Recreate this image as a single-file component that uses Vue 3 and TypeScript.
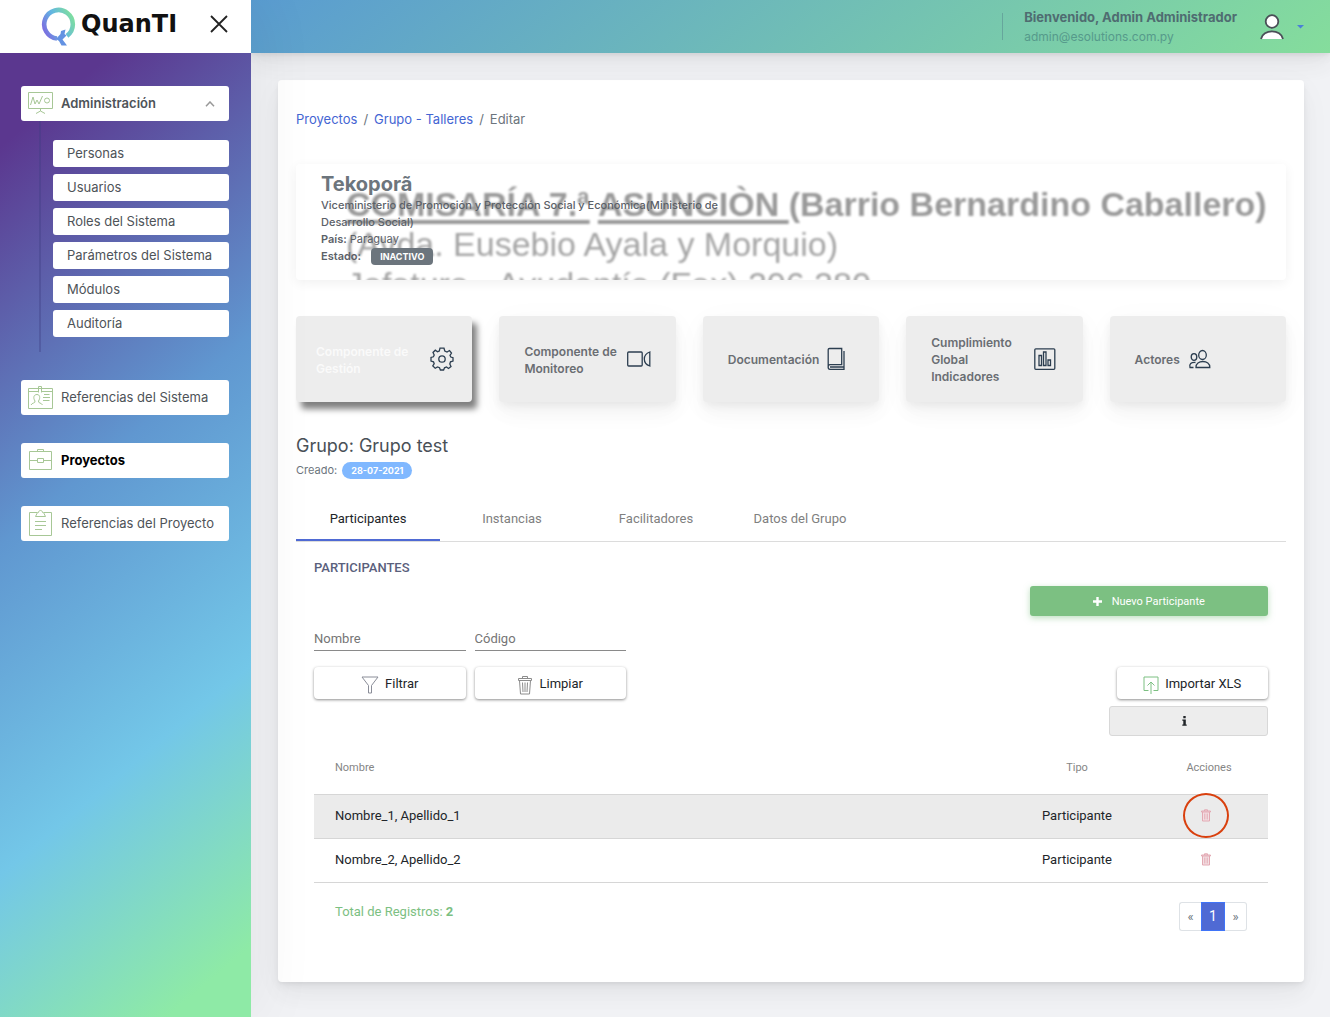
<script setup lang="ts">
import { ref } from 'vue'

interface Participant {
  name: string
  type: string
  marked: boolean
}

const adminLinks: string[] = ['Personas', 'Usuarios', 'Roles del Sistema', 'Parámetros del Sistema', 'Módulos', 'Auditoría']
const tabs: string[] = ['Participantes', 'Instancias', 'Facilitadores', 'Datos del Grupo']
const activeTab = ref<string>('Participantes')
const adminOpen = ref<boolean>(true)
const filterName = ref<string>('')
const filterCode = ref<string>('')
const participants: Participant[] = [
  { name: 'Nombre_1, Apellido_1', type: 'Participante', marked: true },
  { name: 'Nombre_2, Apellido_2', type: 'Participante', marked: false },
]

function clearFilters(): void {
  filterName.value = ''
  filterCode.value = ''
}
</script>

<template>
  <div class="page">
    <aside class="sidebar">
      <div class="brand">
        <a class="logo" href="#">
          <svg width="35" height="40" viewBox="0 0 35 40" aria-hidden="true">
            <defs>
              <linearGradient id="ring" x1="0" y1="0.7" x2="1" y2="0.2">
                <stop offset="0" stop-color="#7a72e0" />
                <stop offset="0.45" stop-color="#62b6e2" />
                <stop offset="1" stop-color="#7fdf9f" />
              </linearGradient>
            </defs>
            <path d="M16 31.500 A14.300 14.300 0 1 1 26 28.800" fill="none" stroke="url(#ring)" stroke-width="4.600" />
            <path d="M15 32 L19.500 27 L20 24 L24.500 22.500 L23.500 27 L25.500 28.500 L21.500 32.500 L26 38.500 L20.500 38.500 L18 34 Z" fill="#6392e2" />
          </svg>
          <span>QuanTI</span>
        </a>
        <button class="close" type="button" aria-label="Cerrar menú">
          <svg width="18" height="18" viewBox="0 0 18 18"><path d="M1 1 L17 17 M17 1 L1 17" stroke="#222" stroke-width="1.800" fill="none" /></svg>
        </button>
      </div>
      <nav class="menu">
        <div>
          <button class="item open" type="button" :aria-expanded="adminOpen" @click="adminOpen = !adminOpen">
            <svg class="item-icon" width="26" height="26" viewBox="0 0 26 26">
              <path d="M.5 2.500 H24.500 V18.500 H.5 Z M12.500 18.500 V21 L8 23.500 M12.500 21 L17 23.500 M2.500 15 L5 7 L7 14 L9 10 L11 14 L14.500 6" />
              <circle cx="19" cy="10.500" r="2.500" />
            </svg>
            <span>Administración</span>
            <svg class="chevron" width="10" height="6" viewBox="0 0 10 6"><path d="M1 5.300 L5 1 L9 5.300" /></svg>
          </button>
          <ul v-if="adminOpen" class="submenu">
            <li v-for="link in adminLinks" :key="link"><a href="#">{{ link }}</a></li>
          </ul>
        </div>
        <a class="item" href="#">
          <svg class="item-icon" width="26" height="26" viewBox="0 0 26 26">
            <path d="M.5 4.500 H24.500 V24.500 H.5 Z M.5 7.500 H11 M14 7.500 H24.500 M10.500 8.500 V2.500 H13.500 V8.500 M16 10.500 H21.500 M15 13.500 H22 M15 16.500 H21.500 M3 21 C4 18.500 7.500 19.500 7 17 C5 14 5.500 10.500 9 10.500 C12 10.500 12.500 14 10.500 17 C10 19.500 13.500 18.500 14.500 21" />
          </svg>
          <span>Referencias del Sistema</span>
        </a>
        <a class="item current" href="#">
          <svg class="item-icon" width="26" height="26" viewBox="0 0 26 26">
            <path d="M1.500 4.500 H23.500 V22.500 H1.500 Z M9.500 4.500 V2.500 H15.500 V4.500 M1.500 13.500 H9.500 M15.500 13.500 H23.500 M9.500 11.500 H15.500 V15.500 H9.500 Z" />
          </svg>
          <span>Proyectos</span>
        </a>
        <a class="item" href="#">
          <svg class="item-icon" width="26" height="28" viewBox="0 0 26 28">
            <path d="M9 3.500 H1.500 V26.500 H23.500 V3.500 H16 M7.500 7.500 L9.500 3.500 H10.500 C10.500 .8 14.500 .8 14.500 3.500 H15.500 L17.500 7.500 Z M7 12.500 H18 M7 16.500 H18 M7 20.500 H14" />
          </svg>
          <span>Referencias del Proyecto</span>
        </a>
      </nav>
    </aside>

    <div class="body">
      <header class="topbar">
        <div class="user">
          <strong>Bienvenido, Admin Administrador</strong>
          <span>admin@esolutions.com.py</span>
        </div>
        <button class="account" type="button" aria-label="Cuenta">
          <svg width="24" height="26" viewBox="0 0 24 26">
            <circle cx="12" cy="7.500" r="6.300" fill="#fff" stroke="#4a4f57" stroke-width="1.800" />
            <path d="M1 25 C2.500 14.500 21.500 14.500 23 25 Z" fill="#fff" />
            <path d="M1 25 C3 14.800 21 14.800 23 25" fill="none" stroke="#4a4f57" stroke-width="1.800" />
          </svg>
          <svg width="7" height="4" viewBox="0 0 7 4"><path d="M0 0 H7 L3.500 3.500 Z" fill="#4a7fd8" /></svg>
        </button>
      </header>

      <main>
        <section class="card">
          <nav class="crumbs" aria-label="Ruta">
            <a href="#">Proyectos</a><i>/</i><a href="#">Grupo - Talleres</a><i>/</i><span>Editar</span>
          </nav>

          <div class="banner">
            <div class="scan" aria-hidden="true">
              <p class="scan-bold"><u>COMISARÍA 7.ª</u> <u>ASUNCIÒN&nbsp;</u>(Barrio Bernardino Caballero)</p>
              <p>(Avda. Eusebio Ayala y Morquio)</p>
              <p>Jefatura - Ayudantía (Fax) 206 280</p>
            </div>
            <div class="project">
              <h1>Tekoporã</h1>
              <p class="org">Viceministerio de Promoción y Protección Social y Económica(Ministerio de Desarrollo Social)</p>
              <p><b>País:</b> Paraguay</p>
              <p><b>Estado:</b> <span class="badge">INACTIVO</span></p>
            </div>
          </div>

          <div class="components">
            <a class="component selected" href="#">
              <span>Componente de Gestión</span>
              <svg width="24" height="24" viewBox="0 0 24 24">
                <path d="M10 1.200 H14 L14.800 4 L17 5 L19.500 3.500 L21.500 6 L20 8.300 L20.800 10 L23 10.700 V14 L20.500 14.800 L19.800 17 L21 19.500 L18.500 21.500 L16.500 20 L14.500 20.800 L13.600 23 H10.400 L9.500 20.700 L7.500 20 L5.200 21.300 L2.800 19 L4.200 16.700 L3.500 14.800 L1 14 V10.500 L3.400 9.800 L4.200 8 L3 5.500 L5.300 3.200 L7.500 4.700 L9.300 4 Z" />
                <circle cx="12" cy="12" r="3.200" />
              </svg>
            </a>
            <a class="component" href="#">
              <span>Componente de Monitoreo</span>
              <svg width="24" height="18" viewBox="0 0 24 18">
                <rect x="0.700" y="2" width="14.500" height="14" rx="1" />
                <path d="M22.800 2 V16 C15.500 13.500 15.500 4.500 22.800 2 Z" />
              </svg>
            </a>
            <a class="component" href="#">
              <span>Documentación</span>
              <svg width="18" height="24" viewBox="0 0 18 24">
                <path d="M2.500 1.500 H14.700 V17.700 H3 C.5 17.700 .5 22.300 3 22.300 H17 V4 M3 20 H16.500 M1.200 20 V2.500 Q1.200 1.500 2.500 1.500" />
              </svg>
            </a>
            <a class="component" href="#">
              <span>Cumplimiento Global Indicadores</span>
              <svg width="22" height="24" viewBox="0 0 22 24">
                <rect x="0.800" y="1.800" width="20" height="20.500" rx="1" />
                <path d="M5 8.500 H7.500 V18.500 H5 Z M9.500 5 H12 V18.500 H9.500 Z M14 13 H16.500 V18.500 H14 Z" />
              </svg>
            </a>
            <a class="component" href="#">
              <span>Actores</span>
              <svg width="24" height="20" viewBox="0 0 24 20">
                <ellipse cx="14.500" cy="6" rx="3.800" ry="4.500" />
                <ellipse cx="6" cy="8" rx="2.800" ry="3.300" />
                <path d="M8 18.500 C7.300 10.500 22.500 10.500 21.800 18.500 Z M5.500 18.500 H2 C1 15 3 13.200 7.500 13.500" />
              </svg>
            </a>
          </div>

          <h2>Grupo: Grupo test</h2>
          <p class="created">Creado: <span class="pill">28-07-2021</span></p>

          <div class="tabs" role="tablist">
            <button
              v-for="tab in tabs"
              :key="tab"
              type="button"
              role="tab"
              :aria-selected="tab === activeTab"
              :class="{ active: tab === activeTab }"
              @click="activeTab = tab"
            >{{ tab }}</button>
          </div>

          <div class="panel">
            <h3>PARTICIPANTES</h3>
            <button class="new" type="button">
              <svg width="9" height="9" viewBox="0 0 9 9"><path d="M4.500 0 V9 M0 4.500 H9" stroke="#fff" stroke-width="2.400" /></svg>
              Nuevo Participante
            </button>

            <form class="filters" @submit.prevent>
              <input v-model="filterName" type="text" placeholder="Nombre" aria-label="Nombre" />
              <input v-model="filterCode" type="text" placeholder="Código" aria-label="Código" />
              <button class="raised" type="submit">
                <svg width="18" height="18" viewBox="0 0 18 18" stroke="#8a8d98"><path d="M1 1 H17 L10.500 9.500 V17 H7.500 V9.500 Z" /></svg>
                Filtrar
              </button>
              <button class="raised" type="button" @click="clearFilters">
                <svg width="16" height="20" viewBox="0 0 16 20" stroke="#8c8c8c"><path d="M1.500 3.500 H14.500 V5.500 H1.500 Z M5.500 3.500 V1.500 H10.500 V3.500 M2.500 5.500 L3.500 19 H12.500 L13.500 5.500 M5.500 7.500 L6 17 M8 7.500 V17 M10.500 7.500 L10 17" /></svg>
                Limpiar
              </button>
              <button class="raised import" type="button">
                <svg width="16" height="18" viewBox="0 0 16 18" stroke="#7cc082"><path d="M5.500 14.500 H1 V1 H15 V14.500 H10.500 M8 18 V6 M4.500 9.500 L8 6 L11.500 9.500" /></svg>
                Importar XLS
              </button>
            </form>
            <button class="info" type="button" aria-label="Información">
              <svg width="5" height="10" viewBox="0 0 5 10"><path d="M1.300 0 H3.700 V2.200 H1.300 Z M.3 3.500 H3.800 V8.500 H4.700 V9.800 H.3 V8.500 H1.300 V4.800 H.3 Z" fill="#212529" /></svg>
            </button>

            <table>
              <thead>
                <tr><th>Nombre</th><th class="type">Tipo</th><th class="actions">Acciones</th></tr>
              </thead>
              <tbody>
                <tr v-for="p in participants" :key="p.name" :class="{ marked: p.marked }">
                  <td>{{ p.name }}</td>
                  <td class="type">{{ p.type }}</td>
                  <td class="actions">
                    <button class="delete" type="button" :aria-label="'Eliminar ' + p.name">
                      <svg width="10" height="13" viewBox="0 0 10 13"><path d="M.5 2 H9.500 V3 H.5 Z M3.500 2 V.8 H6.500 V2 M1.500 3 V12 H8.500 V3 M3.800 4.500 V10.500 M6.200 4.500 V10.500" /></svg>
                    </button>
                  </td>
                </tr>
              </tbody>
            </table>

            <div class="foot">
              <p>Total de Registros: <b>2</b></p>
              <div class="pager">
                <button type="button" aria-label="Anterior">«</button>
                <button class="on" type="button">1</button>
                <button type="button" aria-label="Siguiente">»</button>
              </div>
            </div>
          </div>
        </section>
      </main>
    </div>
  </div>
</template>

<style>
body { margin: 0; }
</style>

<style scoped>
* { box-sizing: border-box; }
h1, h2, h3, p, ul { margin: 0; padding: 0; }
a { text-decoration: none; }
button, input { font-family: inherit; margin: 0; padding: 0; border: 0; background: none; cursor: pointer; }
svg { display: block; flex: none; }

.page {
  display: flex;
  min-height: 100vh;
  background: #f1f2f5;
  font-family: Inter, "Liberation Sans", sans-serif;
  font-size: 13px;
  color: #495057;
}

.sidebar {
  position: relative;
  z-index: 2;
  flex: 0 0 251px;
  display: flex;
  flex-direction: column;
  box-shadow: 7px 0 60px rgba(0, 0, 0, 0.06);
}
.brand { height: 53px; padding: 0 23px 0 41px; display: flex; align-items: center; justify-content: space-between; background: #fff; }
.logo { display: flex; align-items: center; gap: 5px; color: #111; font: 700 24px "DejaVu Sans", sans-serif; }
.logo span { margin-top: -6px; }
.close { margin-bottom: 5px; }
.menu {
  flex: 1;
  display: flex;
  flex-direction: column;
  gap: 28px;
  padding: 33px 22px 33px 21px;
  background: linear-gradient(140deg, #5b378f 8%, #6097d0 42%, #73c7e8 70%, #8eeaa6 94%);
}
.item { display: flex; align-items: center; gap: 7px; width: 100%; height: 35px; padding: 0 14px 2px 7px; border-radius: 3px; background: #fff; color: #4e5358; font-size: 13px; text-align: left; }
.item.open { font-weight: 600; }
.item.current { font-weight: 700; color: #000; }
.item-icon { fill: none; stroke: #a7c796; stroke-width: 1; }
.chevron { margin: 3px 0 0 auto; fill: none; stroke: #999; stroke-width: 1.5; }
.submenu { list-style: none; margin-left: 18px; padding: 19px 0 15px 12px; border-left: 2px solid rgba(60, 60, 130, 0.35); display: flex; flex-direction: column; gap: 7px; }
.submenu a { display: block; height: 27px; padding-left: 14px; border-radius: 3px; background: #fff; color: #4e5358; line-height: 27px; }

.body { flex: 1; min-width: 0; display: flex; flex-direction: column; }
.topbar {
  position: relative;
  z-index: 1;
  height: 53px;
  padding: 0 26px 0 0;
  display: flex;
  align-items: center;
  justify-content: flex-end;
  gap: 23px;
  background: linear-gradient(140deg, #5a9cd1, #85dd9c);
  box-shadow: 0 7px 35px rgba(4, 9, 20, 0.03), 0 15px 22px rgba(4, 9, 20, 0.03), 0 4px 9px rgba(4, 9, 20, 0.05), 0 2px 3px rgba(4, 9, 20, 0.03);
}
.user { height: 27px; padding-left: 21px; border-left: 1px solid #66a69c; display: flex; flex-direction: column; justify-content: center; line-height: 19px; color: #569a8b; }
.user strong { font-weight: 700; color: #4f6c71; }
.user span { font-size: 12px; }
.account { display: flex; align-items: center; gap: 13px; }

main { flex: 1; padding: 27px 26px 35px 27px; }
.card {
  padding: 29px 18px 18px;
  border-radius: 4px;
  background: #fff;
  box-shadow: 0 7px 35px rgba(4, 9, 20, 0.03), 0 15px 22px rgba(4, 9, 20, 0.03), 0 4px 9px rgba(4, 9, 20, 0.05), 0 2px 3px rgba(4, 9, 20, 0.03);
}
.crumbs { display: flex; line-height: 20px; color: #6c757d; }
.crumbs a { color: #4465d3; }
.crumbs i { padding: 0 6px; font-style: normal; }

.banner { position: relative; min-height: 116px; margin-top: 35px; padding: 8px 25px; border-radius: 4px; overflow: hidden; box-shadow: 0 3px 12px rgba(4, 9, 20, 0.06); }
.scan { position: absolute; top: 20px; left: 50px; font: 34px/40px "Liberation Sans", Arial, sans-serif; color: #a4a4a4; white-space: nowrap; filter: blur(1px); }
.scan-bold { font-weight: 700; color: #999; }
.scan-bold u { text-decoration-thickness: 4px; text-underline-offset: 4px; text-decoration-skip-ink: none; }
.project { position: relative; max-width: 450px; font-size: 11px; line-height: 17px; color: #5b6168; }
h1 { font-size: 20px; line-height: 25px; font-weight: 700; color: #6c757d; }
.org { font-weight: 500; }
.project b { font-weight: 600; }
.badge { display: inline-block; margin-left: 7px; padding: 0 9px; border-radius: 4px; background: #6c757d; color: #fff; font-size: 9px; font-weight: 700; vertical-align: top; }

.components { display: grid; grid-template-columns: repeat(5, 1fr); gap: 27px; margin-top: 36px; }
.component { display: flex; align-items: center; gap: 8px; height: 86px; padding-left: 25px; border-radius: 4px; background: #ededed; color: #6a6e73; font-size: 12px; line-height: 17px; font-weight: 600; box-shadow: 0 7px 35px rgba(4, 9, 20, 0.03), 0 12px 18px rgba(4, 9, 20, 0.03), 0 4px 8px rgba(4, 9, 20, 0.05); }
.component span { max-width: 95px; padding-top: 1px; }
.component svg { fill: none; stroke: #2c3e50; stroke-width: 1.3; }
.component.selected { padding-left: 20px; gap: 19px; color: #fafafa; box-shadow: 5px 7px 6px rgba(0, 0, 0, 0.5); }

h2 { margin-top: 32px; font-size: 18px; line-height: 24px; font-weight: 400; }
.created { margin-top: 4px; font-size: 11px; line-height: 17px; color: #6c757d; }
.pill { display: inline-block; margin-left: 2px; padding: 0 9px; border-radius: 9px; background: #80b8ff; color: #fff; font-size: 9px; font-weight: 700; vertical-align: top; }

.tabs { display: flex; margin-top: 18px; border-bottom: 1px solid #dcdcdc; font-family: Roboto, sans-serif; }
.tabs button { width: 144px; height: 44px; border-bottom: 2px solid transparent; font-size: 13px; color: #808080; }
.tabs .active { border-color: #4f6ad4; color: #212529; }

.panel { padding: 16px 18px 33px; font-family: Roboto, sans-serif; }
h3 { font-size: 13px; line-height: 20px; font-weight: 500; color: #5a607c; }
.new { display: flex; align-items: center; justify-content: center; gap: 10px; width: 25%; height: 30px; margin: 8px 0 0 auto; border-radius: 3px; background: #7cc082; color: #fff; font-size: 11px; box-shadow: 0 2px 6px rgba(124, 192, 130, 0.5); }
.filters { display: grid; grid-template-columns: repeat(6, 1fr); column-gap: 9px; row-gap: 16px; margin-top: 10px; }
.filters input { grid-row: 1; width: 100%; height: 25px; border-bottom: 1px solid #8a8a8a; font-size: 13px; color: #212529; outline: none; }
.filters input::placeholder { color: #757575; opacity: 1; }
.raised { grid-row: 2; display: flex; align-items: center; justify-content: center; gap: 6px; height: 32px; border-radius: 4px; background: #fff; color: #212529; font-size: 13px; box-shadow: 0 1px 3px rgba(0, 0, 0, 0.45); }
.raised svg { margin-top: 4px; fill: none; stroke-width: 1; }
.import { grid-column: 6; }
.info { display: flex; align-items: center; justify-content: center; width: calc(100% / 6); height: 30px; margin: 7px 0 0 auto; padding-right: 8px; border: 1px solid #d8d8d8; border-radius: 3px; background: #ededed; }

table { width: 100%; margin-top: 9px; border-collapse: collapse; table-layout: fixed; color: #212529; }
th { height: 49px; padding: 0 0 3px 21px; font-size: 11px; font-weight: 400; text-align: left; color: #858585; }
td { height: 44px; padding: 0 0 1px 21px; border-top: 1px solid #d6d6d6; border-bottom: 1px solid #d6d6d6; }
.marked td { background: #ebebeb; }
.type { width: 134px; padding-left: 0; text-align: center; }
.actions { width: 124px; padding-left: 0; text-align: center; }
th.actions { padding-left: 6px; }
.delete { position: relative; display: block; margin: 0 auto; }
.delete svg { fill: #f3dfe3; stroke: #e3a9b3; stroke-width: 1; }
.marked .delete::after { content: ""; position: absolute; inset: -16px -18px; border: 2px solid #d9400e; border-radius: 50%; }

.foot { display: flex; justify-content: space-between; margin-top: 19px; padding: 0 21px; color: #7cc082; line-height: 20px; }
.foot b { font-weight: 700; }
.pager { display: flex; }
.pager button { width: 22px; height: 29px; border: 1px solid #dee2e6; color: #6c757d; font-size: 13px; }
.pager button:first-child { border-right: 0; border-radius: 3px 0 0 3px; }
.pager button:last-child { border-left: 0; border-radius: 0 3px 3px 0; }
.pager .on { width: 24px; border-color: #3f74f8; background: #4f6ad4; color: #fff; font-size: 14px; }
</style>
